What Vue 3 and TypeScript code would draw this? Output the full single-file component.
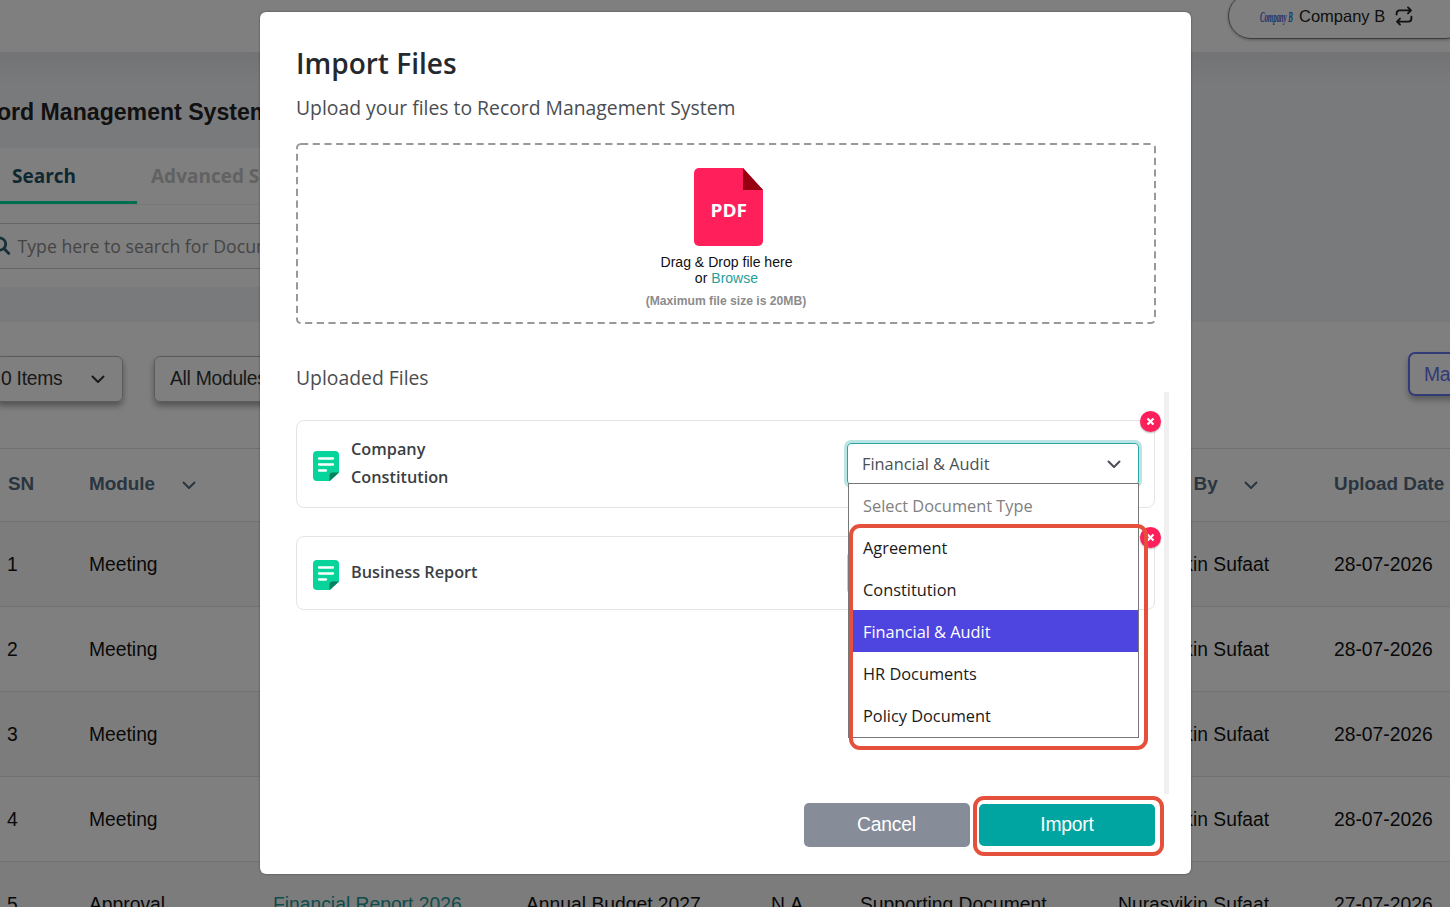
<script setup lang="ts">
interface Row {
  sn: number
  module: string
  name?: string
  title?: string
  reference?: string
  type?: string
  by: string
  date: string
}

interface UploadedFile {
  lines: string[]
  selected: string
  open: boolean
}

const rows: Row[] = [
  { sn: 1, module: 'Meeting', by: 'Nurasyikin Sufaat', date: '28-07-2026' },
  { sn: 2, module: 'Meeting', by: 'Nurasyikin Sufaat', date: '28-07-2026' },
  { sn: 3, module: 'Meeting', by: 'Nurasyikin Sufaat', date: '28-07-2026' },
  { sn: 4, module: 'Meeting', by: 'Nurasyikin Sufaat', date: '28-07-2026' },
  {
    sn: 5,
    module: 'Approval',
    name: 'Financial Report 2026',
    title: 'Annual Budget 2027',
    reference: 'N.A',
    type: 'Supporting Document',
    by: 'Nurasyikin Sufaat',
    date: '27-07-2026',
  },
]

const files: UploadedFile[] = [
  { lines: ['Company', 'Constitution'], selected: 'Financial & Audit', open: true },
  { lines: ['Business Report'], selected: '', open: false },
]

const options: string[] = [
  'Select Document Type',
  'Agreement',
  'Constitution',
  'Financial & Audit',
  'HR Documents',
  'Policy Document',
]
</script>

<template>
  <div class="app">
    <div class="page">
      <header class="topbar">
        <div class="company">
          <span class="company-logo"><span>Company B</span></span>
          <span class="company-name">Company B</span>
          <svg class="swap" width="18" height="20" viewBox="0 0 18 20">
            <path d="M1.600 8.600V7.400a3 3 0 0 1 3-3H15.500M13 1.400l3 3-3 3M16.400 10.600v2a3 3 0 0 1-3 3H2.500M5 12.600l-3 3 3 3" />
          </svg>
        </div>
      </header>

      <div class="upper">
        <h1>ord Management System</h1>
        <section class="search-panel">
          <nav class="tabs">
            <span class="tab active">Search</span>
            <span class="tab">Advanced Search</span>
          </nav>
          <div class="search-box">
            <svg class="lens" width="16" height="24" viewBox="0 0 16 24">
              <circle cx="3.500" cy="10" r="6.200" />
              <path d="M8.200 14.800l4.600 4.600" />
            </svg>
            <span>Type here to search for Document</span>
          </div>
        </section>
      </div>

      <section class="toolbar">
        <div class="filter items"><span>0 Items</span>
          <svg class="chev" width="14" height="9" viewBox="0 0 14 9"><path d="M1.500 1.500 7 7l5.500-5.500" /></svg>
        </div>
        <div class="filter modules"><span>All Modules</span></div>
        <div class="manage">Manage</div>
      </section>

      <section class="table">
        <div class="row head">
          <span>SN</span>
          <span>Module<svg class="chev" width="14" height="9" viewBox="0 0 14 9"><path d="M1.500 1.500 7 7l5.500-5.500" /></svg></span>
          <span></span><span></span><span></span><span></span>
          <span>Created By<svg class="chev" width="14" height="9" viewBox="0 0 14 9"><path d="M1.500 1.500 7 7l5.500-5.500" /></svg></span>
          <span>Upload Date</span>
        </div>
        <div v-for="r in rows" :key="r.sn" class="row body">
          <span>{{ r.sn }}</span>
          <span>{{ r.module }}</span>
          <span class="link">{{ r.name }}</span>
          <span>{{ r.title }}</span>
          <span>{{ r.reference }}</span>
          <span>{{ r.type }}</span>
          <span>{{ r.by }}</span>
          <span>{{ r.date }}</span>
        </div>
      </section>
    </div>

    <div class="backdrop">
      <div class="modal">
        <h2>Import Files</h2>
        <p class="sub">Upload your files to Record Management System</p>

        <div class="drop">
          <svg class="dash" width="860" height="181" viewBox="0 0 860 181">
            <rect x="1" y="1" width="858" height="179" rx="4" />
          </svg>
          <svg class="pdf" width="69" height="78" viewBox="0 0 69 78">
            <path d="M5 0H49L69 22V73a5 5 0 0 1-5 5H5a5 5 0 0 1-5-5V5a5 5 0 0 1 5-5z" fill="#ff1f5b" />
            <path d="M49 0 69 22H49z" fill="#970010" />
            <text x="16.500" y="49" textLength="36.500" lengthAdjust="spacingAndGlyphs">PDF</text>
          </svg>
          <div class="drop-text">Drag &amp; Drop file here<br />or <a>Browse</a></div>
          <div class="limit">(Maximum file size is 20MB)</div>
        </div>

        <p class="uploaded">Uploaded Files</p>

        <div class="list">
          <div v-for="(f, i) in files" :key="i" class="card" :class="{ tall: f.lines.length > 1 }">
            <svg class="doc" width="26" height="30" viewBox="0 0 26 30">
              <path d="M4 0H22a4 4 0 0 1 4 4V21.500L17 30H4a4 4 0 0 1-4-4V4a4 4 0 0 1 4-4z" fill="#06d49a" />
              <path d="M26 21.500 16.500 30V24.500a3 3 0 0 1 3-3z" fill="#05805f" />
              <path d="M6 7.500H20M6 13.500H20M6 19.500H13" stroke="#fff" stroke-width="2.300" stroke-linecap="round" />
            </svg>
            <div class="file-name"><div v-for="l in f.lines" :key="l">{{ l }}</div></div>
            <div class="select" :class="{ focus: f.open }">
              <span>{{ f.selected }}</span>
              <svg v-if="f.open" class="chev" width="14" height="9" viewBox="0 0 14 9"><path d="M1.500 1.500 7 7l5.500-5.500" /></svg>
              <div v-if="f.open" class="menu">
                <div
                  v-for="(o, k) in options"
                  :key="o"
                  class="option"
                  :class="{ placeholder: k === 0, chosen: o === f.selected }"
                >{{ o }}</div>
                <div class="mark menu-mark"></div>
              </div>
            </div>
            <span class="remove">
              <svg width="9" height="9" viewBox="0 0 9 9"><path d="M1.500 1.500l6 6M7.500 1.500l-6 6" /></svg>
            </span>
          </div>
        </div>

        <div class="actions">
          <button class="cancel">Cancel</button>
          <div class="import-wrap">
            <button class="import">Import</button>
            <div class="mark import-mark"></div>
          </div>
        </div>
      </div>
    </div>
  </div>
</template>

<style>
html,
body {
  overflow: hidden;
}
</style>

<style scoped>
* {
  box-sizing: border-box;
}
.app {
  position: relative;
  width: 1450px;
  height: 907px;
  overflow: hidden;
  font-family: 'Liberation Sans', Arial, sans-serif;
  white-space: nowrap;
}
.page {
  height: 907px;
  overflow: hidden;
  background: #fff;
}
svg {
  flex: none;
  fill: none;
}
.chev path {
  stroke: currentColor;
  stroke-width: 2;
  stroke-linecap: round;
  stroke-linejoin: round;
}

/* Page behind the dialog */
.topbar {
  display: flex;
  justify-content: flex-end;
  height: 52px;
  background: #fff;
}
.company {
  display: flex;
  align-items: center;
  width: 240px;
  height: 46px;
  margin: -7px -18px 0 0;
  padding-left: 31px;
  border: 1px solid #777;
  border-radius: 23px;
  box-shadow: 0 1px 3px rgba(0, 0, 0, 0.3);
  font-size: 16.500px;
  color: #222;
}
.company-logo {
  width: 32px;
}
.company-logo span {
  display: inline-block;
  transform: scaleX(0.46);
  transform-origin: left center;
  font: italic 700 15px 'Liberation Serif', serif;
  letter-spacing: -0.200px;
  color: #3566d8;
}
.company-name {
  width: 87px;
  margin-left: 7px;
}
.swap {
  margin-left: 9px;
}
.swap path {
  stroke: #222;
  stroke-width: 1.900;
  stroke-linecap: round;
  stroke-linejoin: round;
}
.upper {
  height: 270px;
  background: linear-gradient(#e6e7ea, #f3f4f8 32px);
}
h1 {
  height: 96px;
  margin: 0 0 0 -3px;
  padding-top: 44px;
  font-size: 23.100px;
  line-height: 32px;
  color: #222;
}
.search-panel {
  width: 1170px;
  height: 139px;
  background: #fff;
}
.tabs {
  display: flex;
  height: 57px;
  border-bottom: 1px solid #f0f0f0;
  font: 700 19px/57px 'Open Sans', 'Noto Sans', sans-serif;
}
.tab {
  padding-left: 14px;
  color: #c4c4c4;
}
.tab.active {
  width: 137px;
  height: 56px;
  padding-left: 12px;
  border-bottom: 3px solid #00dca0;
  color: #1d5064;
}
.search-box {
  display: flex;
  align-items: center;
  height: 46px;
  margin-top: 18px;
  border: solid #c9cbd2;
  border-width: 1px 0;
  font: 17.700px 'Open Sans', 'Noto Sans', sans-serif;
  color: #8a8a8a;
}
.lens {
  margin-left: -4px;
  margin-right: 5.500px;
}
.lens circle,
.lens path {
  stroke: #2c5f70;
  stroke-width: 2.800;
  stroke-linecap: round;
}
.toolbar {
  display: flex;
  align-items: flex-start;
  height: 126px;
  padding-top: 34px;
}
.filter {
  display: flex;
  align-items: center;
  height: 46px;
  border: 1px solid #b5b7bd;
  border-radius: 6px;
  box-shadow: 0 4px 6px rgba(0, 0, 0, 0.35);
  font-size: 19.300px;
  letter-spacing: -0.270px;
  color: #333;
}
.items {
  width: 127px;
  margin-left: -4px;
  padding-left: 4px;
}
.items .chev {
  margin-left: 29px;
}
.modules {
  width: 180px;
  margin-left: 31px;
  padding-left: 15px;
}
.manage {
  width: 130px;
  height: 44px;
  margin: -4px -88px 0 auto;
  padding-left: 14px;
  border: 2px solid #6474ee;
  border-radius: 7px;
  box-shadow: 0 4px 6px rgba(0, 0, 0, 0.3);
  font-size: 19.300px;
  letter-spacing: -0.270px;
  line-height: 41px;
  color: #6474ee;
}
.row {
  display: grid;
  grid-template-columns: 82px 184px 253px 245px 89px 258px 216px 140px;
  align-items: center;
  height: 85px;
  padding: 1px 0 0 7px;
  border-bottom: 1px solid #e4e4e4;
  font-size: 19.300px;
  color: #111;
}
.row.head {
  grid-template-columns: 81px 184px 253px 245px 89px 258px 216px 140px;
  height: 74px;
  padding: 0 0 2px 8px;
  border-top: 1px solid #dedede;
  font-size: 18.900px;
  font-weight: 700;
  color: #546b80;
}
.row.body:nth-child(even) {
  background: #f9f9f9;
}
.row .chev {
  margin-left: 26.500px;
}
.link {
  color: #1c9a98;
}

/* Dialog */
.backdrop {
  position: absolute;
  inset: 0;
  display: flex;
  align-items: flex-start;
  padding: 12px 0 0 260px;
  background: rgba(0, 0, 0, 0.5);
}
.modal {
  width: 931px;
  height: 862px;
  padding: 31px 36px 0 36px;
  border-radius: 6px;
  background: #fff;
  font-family: 'Open Sans', 'Noto Sans', sans-serif;
  box-shadow: 0 0 2px rgba(0, 0, 0, 0.5);
}
h2 {
  margin: 0;
  font-size: 28px;
  font-weight: 600;
  line-height: 40px;
  color: #25292e;
}
.sub,
.uploaded {
  margin: 0;
  font-size: 19.350px;
  line-height: 28px;
  color: #4a4d52;
}
.sub {
  margin-top: 11px;
}
.drop {
  position: relative;
  display: flex;
  flex-direction: column;
  align-items: center;
  width: 860px;
  height: 181px;
  margin-top: 21px;
  padding-top: 25px;
  font-family: 'Liberation Sans', Arial, sans-serif;
}
.dash {
  position: absolute;
  inset: 0;
}
.dash rect {
  stroke: #999;
  stroke-width: 2;
  stroke-dasharray: 7.200 4.500;
}
.pdf {
  margin-left: 5px;
}
.pdf text {
  font: 700 17px 'Open Sans', 'Noto Sans', sans-serif;
  fill: #fff;
}
.drop-text {
  margin: 8px 0 0 1px;
  font-size: 14.050px;
  line-height: 16.300px;
  text-align: center;
  color: #111;
}
.drop-text a {
  color: #1fa09c;
}
.limit {
  margin-top: 6px;
  font-size: 12.150px;
  font-weight: 700;
  line-height: 16px;
  color: #8c8c8c;
}
.uploaded {
  margin-top: 40px;
}
.list {
  display: flex;
  flex-direction: column;
  gap: 28px;
  width: 873px;
  height: 402px;
  padding: 28px 9px 0 0;
  border-right: 5px solid #f0f0f0;
}
.card {
  position: relative;
  display: flex;
  align-items: center;
  width: 859px;
  height: 74px;
  padding: 0 15px 0 16px;
  border: 1px solid #e4e4e4;
  border-radius: 8px;
}
.card.tall {
  height: 88px;
}
.doc {
  margin-top: 4px;
}
.file-name {
  margin-left: 12px;
  padding-bottom: 2px;
  font-size: 16.280px;
  font-weight: 600;
  line-height: 28px;
  color: #3b3e43;
}
.select {
  position: relative;
  display: flex;
  align-items: center;
  justify-content: space-between;
  width: 292px;
  height: 42px;
  margin-left: auto;
  padding: 0 17px 0 14px;
  border: 1px solid #c4cad0;
  border-radius: 4px;
  font-size: 16.350px;
  color: #4a4f55;
}
.select.focus {
  border-color: #2aa5a2;
  box-shadow: 0 0 0 3px #b9e5e4;
}
.menu {
  position: absolute;
  z-index: 3;
  top: 39px;
  left: 0;
  width: 291px;
  height: 255px;
  border: 1px solid #777;
  background: #fff;
}
.option {
  height: 42px;
  padding-left: 14px;
  line-height: 44px;
  color: #1a1a1a;
}
.option.placeholder {
  color: #808080;
}
.option.chosen {
  background: #4e44e0;
  color: #fff;
}
.mark {
  position: absolute;
  border: 4px solid #e5503c;
  border-radius: 11px;
}
.menu-mark {
  top: 40px;
  left: 0;
  width: 299px;
  height: 226px;
}
.remove {
  position: absolute;
  z-index: 1;
  top: -10px;
  right: -6.500px;
  display: flex;
  align-items: center;
  justify-content: center;
  width: 21px;
  height: 21px;
  border-radius: 50%;
  background: #ff1f5b;
  box-shadow: 0 1px 2px rgba(0, 0, 0, 0.3);
}
.remove path {
  stroke: #fff;
  stroke-width: 2.200;
}
.actions {
  display: flex;
  align-items: center;
  justify-content: flex-end;
  gap: 10px;
  margin-top: 9px;
}
button {
  display: block;
  height: 44px;
  padding: 0;
  border: 0;
  border-radius: 5px;
  color: #fff;
  font: 19.300px 'Liberation Sans', Arial, sans-serif;
  letter-spacing: -0.200px;
}
.cancel {
  width: 166px;
  margin-right: -0.500px;
  background: #868d99;
}
.import-wrap {
  position: relative;
}
.import {
  width: 176px;
  height: 42px;
  background: #00a4a1;
}
.import-mark {
  top: -8px;
  left: -6px;
  width: 191px;
  height: 60px;
}
</style>
